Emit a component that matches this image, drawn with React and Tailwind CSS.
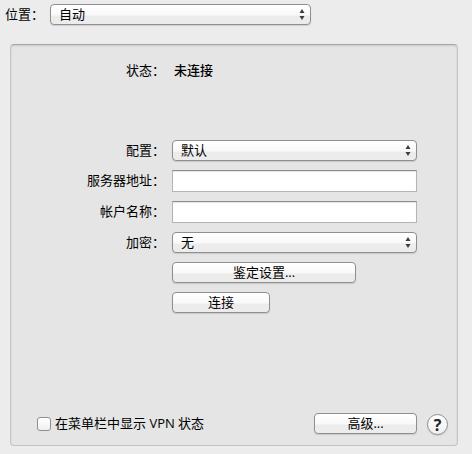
import React from "react";

const buttonFace =
  "h-[21px] rounded-[4px] border border-[#8f8f8f] bg-linear-to-b from-white from-0% via-[#f9f9f9] via-50% to-[#ececec] to-60% text-[13px] leading-[19px] text-black shadow-[0_1px_1px_rgba(0,0,0,0.12)]";

const labelText = "pb-0.5 text-right leading-[18px] whitespace-nowrap";

function PopUp({ id, value }) {
  return (
    <div className="grid w-full items-center">
      <select
        id={id}
        defaultValue={value}
        className={`${buttonFace} col-start-1 row-start-1 w-full appearance-none pr-6 pl-2`}
      >
        <option>{value}</option>
      </select>
      <svg
        className="pointer-events-none col-start-1 row-start-1 mr-[6px] justify-self-end"
        width="6"
        height="11"
        viewBox="0 0 6 11"
        fill="#3c3c3c"
        aria-hidden="true"
      >
        <path d="M3 0L5.5 4H0.5ZM0.5 7H5.5L3 11Z" />
      </svg>
    </div>
  );
}

function Field({ id }) {
  return (
    <input
      id={id}
      type="text"
      className="h-[22px] w-full border border-[#b4b4b4] border-t-[#8e8e8e] bg-white px-1 text-[13px] shadow-[inset_0_1px_1px_#e4e4e4]"
    />
  );
}

export default function App() {
  return (
    <main className="flex min-h-screen flex-col bg-[#ececec] pt-1 pr-[14px] pb-2 pl-[5px] font-['Open_Sans','Noto_Sans_CJK_SC',sans-serif] text-[13px] leading-5 text-black">
      <div className="flex items-center">
        <label htmlFor="location" className="w-[45px] pb-0.5 leading-[18px] whitespace-nowrap">
          位置：
        </label>
        <div className="w-[261px]">
          <PopUp id="location" value="自动" />
        </div>
      </div>

      <section className="mt-[19px] ml-[5px] flex flex-1 flex-col rounded-[4px] border border-[#c4c4c4] border-t-[#a6a6a6] bg-[#e5e5e5] pt-4 pr-[9px] pb-[9px] shadow-[inset_0_1px_2px_rgba(0,0,0,0.12)]">
        <div className="mr-[31px] grid grid-cols-[154px_minmax(0,1fr)] items-center gap-x-[7px]">
          <span className={labelText}>状态：</span>
          <output className="pb-0.5 pl-[2px] leading-[18px] font-medium">未连接</output>
        </div>

        <div className="mt-[59px] mr-[31px] grid grid-cols-[154px_minmax(0,1fr)] items-center gap-x-[7px] gap-y-[9px]">
          <label htmlFor="config" className={labelText}>
            配置：
          </label>
          <PopUp id="config" value="默认" />
          <label htmlFor="server" className={labelText}>
            服务器地址：
          </label>
          <Field id="server" />
          <label htmlFor="account" className={labelText}>
            帐户名称：
          </label>
          <Field id="account" />
          <label htmlFor="encryption" className={labelText}>
            加密：
          </label>
          <PopUp id="encryption" value="无" />
          <button type="button" className={`${buttonFace} col-start-2 w-[184px]`}>
            鉴定设置...
          </button>
          <button type="button" className={`${buttonFace} col-start-2 w-[98px]`}>
            连接
          </button>
        </div>

        <div className="mt-auto flex items-center pl-[26px]">
          <div className="flex items-center gap-1 pb-0.5 whitespace-nowrap">
            <input
              id="menu-status"
              type="checkbox"
              className="size-[14px] appearance-none rounded-[3px] border border-[#8f8f8f] bg-linear-to-b from-white to-[#f0f0f0] checked:bg-[#6f9fd8]"
            />
            <label htmlFor="menu-status" className="pb-0.5 leading-[18px]">
              在菜单栏中显示 VPN 状态
            </label>
          </div>
          <button type="button" className={`${buttonFace} mb-0.5 ml-auto w-[103px]`}>
            高级...
          </button>
          <button
            type="button"
            aria-label="帮助"
            className="ml-[10px] flex size-[21px] items-center justify-center rounded-full border border-[#8f8f8f] bg-linear-to-b from-white to-[#efefef] text-base leading-none font-bold text-[#222222] shadow-[0_1px_1px_rgba(0,0,0,0.12)]"
          >
            ?
          </button>
        </div>
      </section>
    </main>
  );
}
